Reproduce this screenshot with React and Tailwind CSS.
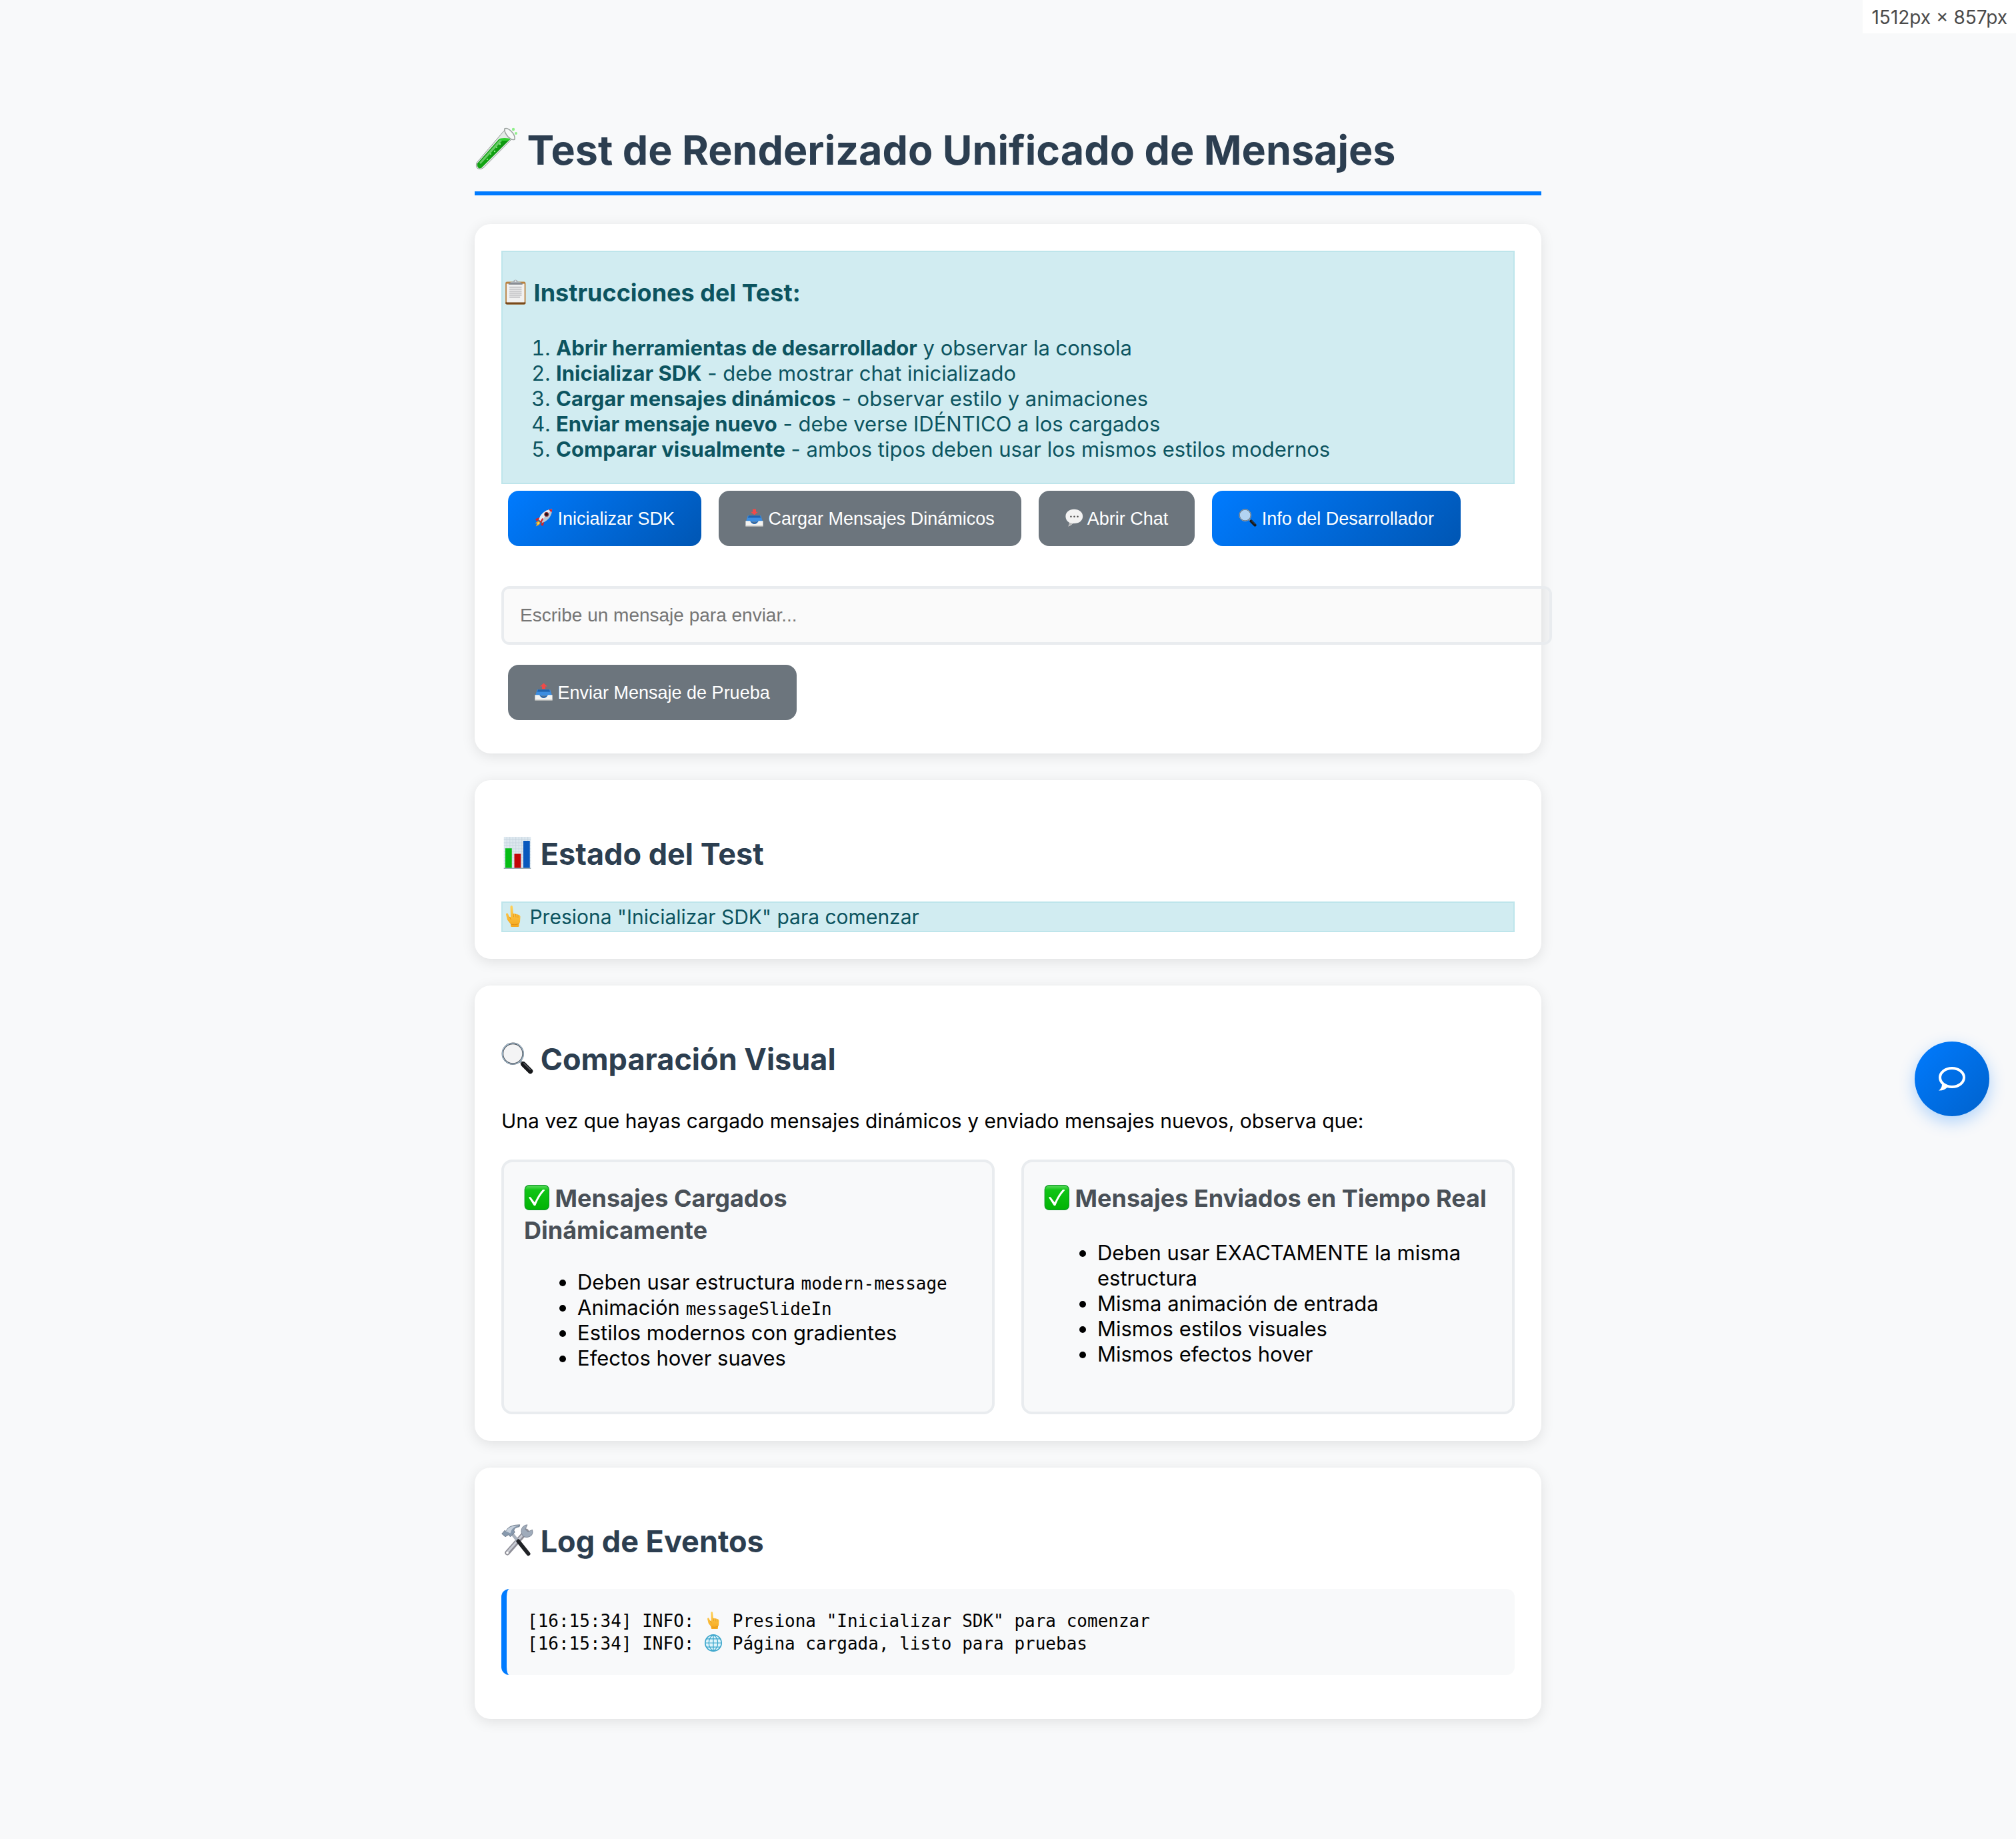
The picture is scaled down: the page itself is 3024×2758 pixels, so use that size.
const Svg = ({ className, children }) => (
  <svg viewBox="0 0 64 64" aria-hidden="true" className={`inline-block shrink-0 ${className}`}>
    {children}
  </svg>
);

const E64 = "size-16 align-[-8px]";
const E48 = "size-12 align-[-6px]";
const E38 = "size-[38px] align-[-5px]";
const E32 = "size-8 align-[-4px]";
const E27 = "size-[27px] align-[-3px]";
const E26 = "size-[26px] align-[-3px]";

const TestTube = ({ className }) => (
  <Svg className={className}>
    <defs>
      <linearGradient id="tube" x1="0" y1="0" x2="1" y2="0.6">
        <stop offset="0" stopColor="#0c8a10" />
        <stop offset="0.5" stopColor="#12a512" />
        <stop offset="1" stopColor="#067a0c" />
      </linearGradient>
    </defs>
    <path d="M45 4 L3 53 Q1 60 5 62 Q10 64 14 60 L58 15Z" fill="#e4eae6" stroke="#8d9692" strokeWidth="1" />
    <path d="M37 17 L4 54 Q3 60 7 61.500 Q10 62 13 58 L53 18Z" fill="url(#tube)" />
    <path d="M38 18 L7 53 L9 55 L43 18Z" fill="#a4e3a2" opacity="0.6" />
    <ellipse cx="45" cy="18" rx="8.500" ry="2" fill="#2fd02f" />
    <g fill="#8ff08a">
      <circle cx="38" cy="25" r="1.200" />
      <circle cx="33" cy="30" r="1" />
      <circle cx="30" cy="36" r="1.200" />
      <circle cx="24" cy="40" r="1" />
      <circle cx="19" cy="48" r="1.100" />
      <circle cx="58" cy="3" r="2.200" />
      <circle cx="62" cy="9" r="2" />
    </g>
    <ellipse cx="52" cy="9" rx="3.500" ry="9.500" transform="rotate(47 52 9)" fill="none" />
    <path d="M45 2Q49 0 55 6Q61 12 60 18Q56 20 50 14Q44 7 45 2Z" fill="#f7f9f8" stroke="#989f9c" strokeWidth="1.500" />
  </Svg>
);

const Clipboard = ({ className }) => (
  <Svg className={className}>
    <rect x="7" y="6" width="51" height="57" rx="4" fill="#b9813f" />
    <rect x="7" y="57" width="51" height="6" rx="3" fill="#7a4a1b" />
    <rect x="10" y="11" width="45" height="47" fill="#f1f1f1" />
    <path d="M17 20H48M17 25H48M17 30H48M17 35H48M17 40H48M17 45H44" stroke="#cdcdcf" strokeWidth="4" />
    <path d="M15 12 Q17 7 26 6 Q28 1 32.500 1 Q37 1 39 6 Q48 7 50 12Z" fill="#a9adb3" />
    <path d="M15 10H50V13H15Z" fill="#7d8187" />
    <circle cx="32.500" cy="4.500" r="2" fill="#e8f0f2" />
  </Svg>
);

const Rocket = ({ className }) => (
  <Svg className={className}>
    <path d="M17 31 L3 36 L6 44 L20 40Z" fill="#d6232a" />
    <path d="M34 46 L30 61 L22 58 L24 42Z" fill="#d6232a" />
    <path d="M16 41 L1 52 L9 52 L4 63 L16 57 L20 50Z" fill="#f9a51b" />
    <path d="M16 45 L7 57 L17 52Z" fill="#ffe65a" />
    <path d="M15 39 C20 19 37 3 62 1 C63 22 49 42 27 50Z" fill="#b9c6d2" />
    <path d="M15 39 C20 19 37 3 62 1 L21 45Z" fill="#e5edf3" />
    <path d="M50 3 Q56 1 62 1 Q62 8 60 13Z" fill="#d6232a" />
    <circle cx="42" cy="20" r="8" fill="#8d2229" />
    <circle cx="42" cy="20" r="5" fill="#10161d" />
    <path d="M13 37 L28 51 L24 54 L11 42Z" fill="#5d6973" />
    <path d="M27 33 L19 46 L24 49 L31 37Z" fill="#d6232a" />
  </Svg>
);

const Tray = ({ className, up }) => (
  <Svg className={className}>
    <path d="M9 24H55L62 46H2Z" fill="#3c8de0" />
    <path d="M12 24H52L55 32H9Z" fill="#1f64b0" />
    <path d="M1 43H17Q23 54 32 54Q41 54 47 43H63V62H1Z" fill="#f3f3f1" />
    <path d="M17 43Q23 54 32 54Q41 54 47 43Q39 50 32 50Q25 50 17 43Z" fill="#1b63b5" />
    <path d="M1 60H63V63H1Z" fill="#bdbdbb" />
    {up ? (
      <path d="M32 1L45 13H38V22H26V13H19Z" fill="#f04a48" />
    ) : (
      <path d="M32 22L45 11H38V1H26V11H19Z" fill="#f04a48" />
    )}
  </Svg>
);

const Bubble = ({ className }) => (
  <Svg className={className}>
    <path d="M31 2C49 2 62 12 62 27S49 52 31 52L27 52Q20 60 10 63Q15 56 14 49Q1 41 1 27C1 12 14 2 31 2Z" fill="#f2f2f2" />
    <path d="M14 49Q15 56 10 63Q20 60 27 52Z" fill="#b9b9b9" />
    <circle cx="20" cy="28" r="3" fill="#4b4b4b" />
    <circle cx="32" cy="28" r="3" fill="#4b4b4b" />
    <circle cx="44" cy="28" r="3" fill="#4b4b4b" />
  </Svg>
);

const Magnifier = ({ className, lens = "#f4f4f5" }) => (
  <Svg className={className}>
    <path d="M38 38L44 45" stroke="#9aa3ab" strokeWidth="6" />
    <path d="M44 44L58 58" stroke="#16181b" strokeWidth="10" strokeLinecap="round" />
    <path d="M45 42L58 55" stroke="#5b6067" strokeWidth="2" strokeLinecap="round" />
    <circle cx="23" cy="23" r="20.500" fill={lens} stroke="#565c63" strokeWidth="3.500" />
    <circle cx="23" cy="23" r="21" fill="none" stroke="#a9c6dd" strokeWidth="1.500" />
  </Svg>
);

const Chart = ({ className }) => (
  <Svg className={className}>
    <rect x="5" y="0" width="54" height="64" fill="#dde8ef" />
    <path
      d="M5 6H59M5 12H59M5 18H59M5 24H59M5 30H59M5 36H59M5 42H59M5 48H59M5 54H59M11 0V64M17 0V64M23 0V64M29 0V64M35 0V64M41 0V64M47 0V64M53 0V64"
      stroke="#c3d2dc"
      strokeWidth="1"
    />
    <rect x="8" y="23" width="13" height="40" fill="#06bd16" />
    <rect x="26" y="34" width="13" height="29" fill="#c30508" />
    <rect x="44" y="8" width="13" height="55" fill="#0958bd" />
    <rect x="5" y="62" width="54" height="2" fill="#9aa9b3" />
  </Svg>
);

const Finger = ({ className }) => (
  <Svg className={className}>
    <defs>
      <linearGradient id="skin" x1="0" y1="0" x2="0" y2="1">
        <stop offset="0" stopColor="#ffd25a" />
        <stop offset="1" stopColor="#f5a81d" />
      </linearGradient>
    </defs>
    <path
      d="M23 4Q23 0 26.500 0Q30 0 30 4L32 25Q36 23 39 26Q43 24 46 28Q52 27 53 33L52 49Q51 53 49 55V62Q49 64 46 64H27Q24 64 24 61V56L14 43L10 27Q10 23 13 23Q16 23 17 27L20 34L24 34Z"
      fill="url(#skin)"
    />
    <path d="M32 25L33 34M39 26L40 35M46 28L46 36M20 34L25 42" fill="none" stroke="#d98b12" strokeWidth="1.500" strokeLinecap="round" />
    <path d="M24 56Q36 60 49 55" fill="none" stroke="#df8f14" strokeWidth="2" />
  </Svg>
);

const Check = ({ className }) => (
  <Svg className={className}>
    <defs>
      <linearGradient id="check" x1="0" y1="0" x2="0" y2="1">
        <stop offset="0" stopColor="#5fdc62" />
        <stop offset="0.2" stopColor="#0fc414" />
        <stop offset="1" stopColor="#02b306" />
      </linearGradient>
    </defs>
    <rect x="2" y="1" width="61" height="62" rx="11" fill="url(#check)" stroke="#149a2a" strokeWidth="2" />
    <path d="M12 32Q14 29 17 31L27 44Q36 24 47 12Q51 11 53 13Q38 29 29 52Q26 54 24 51Z" fill="#fff" />
  </Svg>
);

const Tools = ({ className }) => (
  <Svg className={className}>
    <path d="M50 14L12 57" stroke="#8f8f98" strokeWidth="10" strokeLinecap="round" />
    <path d="M49 14L12 56" stroke="#c9ccd4" strokeWidth="4" strokeLinecap="round" />
    <path d="M52 1L48 10L53 15L62 11Q65 21 56 25Q47 28 42 22Q37 12 43 5Q47 1 52 1Z" fill="#9fabba" stroke="#70798a" strokeWidth="1" />
    <circle cx="12" cy="57" r="2.500" fill="#fff" />
    <path d="M20 17L36 37" stroke="#a7b0bc" strokeWidth="6" />
    <path d="M34 34L54 59" stroke="#202226" strokeWidth="8" strokeLinecap="round" />
    <path d="M1 19L7 12L9 14Q14 1 37 1L36 5Q27 6 25 12L27 16L18 25L14 21L8 25Z" fill="#8799ad" stroke="#606c7b" strokeWidth="1" />
    <path d="M9 14Q15 3 35 2Q20 6 18 18Z" fill="#c6d0dc" />
  </Svg>
);

const Globe = ({ className }) => (
  <Svg className={className}>
    <circle cx="32" cy="32" r="30" fill="#dff4fb" stroke="#3aa5cb" strokeWidth="4" />
    <path
      d="M32 2V62M2 32H62M7 17H57M7 47H57M32 2C10 16 10 48 32 62M32 2C54 16 54 48 32 62"
      fill="none"
      stroke="#3aa5cb"
      strokeWidth="3"
    />
  </Svg>
);

const ChatIcon = () => (
  <svg viewBox="0 0 40 40" aria-hidden="true" className="size-10">
    <ellipse cx="20" cy="18" rx="18" ry="14" fill="none" stroke="#fff" strokeWidth="4" />
    <path d="M5 28Q5 34 0 37.500Q8 38 14 32Z" fill="#fff" />
  </svg>
);

const Card = ({ children }) => (
  <section className="rounded-3xl bg-white p-10 shadow-[0_4px_20px_rgba(0,0,0,0.1)]">{children}</section>
);

const H2 = ({ children }) => (
  <h2 className="my-[42px] text-[45px] leading-[58px] font-bold text-[#2c3e50]">{children}</h2>
);

const buttonTones = {
  blue: "bg-[linear-gradient(135deg,#007bff,#0056b3)]",
  gray: "bg-[#6c757d]",
};

const Button = ({ tone, children }) => (
  <button
    type="button"
    className={`h-[83px] rounded-2xl px-10 font-['Liberation_Sans',sans-serif] text-[27px] leading-8 whitespace-nowrap text-white ${buttonTones[tone]}`}
  >
    {children}
  </button>
);

const steps = [
  ["Abrir herramientas de desarrollador", " y observar la consola"],
  ["Inicializar SDK", " - debe mostrar chat inicializado"],
  ["Cargar mensajes dinámicos", " - observar estilo y animaciones"],
  ["Enviar mensaje nuevo", " - debe verse IDÉNTICO a los cargados"],
  ["Comparar visualmente", " - ambos tipos deben usar los mismos estilos modernos"],
];

const Code = ({ children }) => (
  <code className="font-['DejaVu_Sans_Mono',monospace] text-[26px] leading-none">{children}</code>
);

const Compare = ({ title, children }) => (
  <div className="rounded-2xl border-4 border-[#e9ecef] bg-[#f8f9fa] px-[30px] pt-8 pb-[61px]">
    <h3 className="mb-[37px] text-[36px] leading-[44px] font-bold text-[#495057]">
      <Check className="mb-2 size-[38px] align-[-13px]" /> {title}
    </h3>
    <ul className="list-disc pl-20">{children}</ul>
  </div>
);

export default function App() {
  return (
    <div className="relative min-h-screen bg-[#f8f9fa] px-10 pt-[186px] pb-[180px] font-['Inter',sans-serif] text-[31px] leading-[38px] text-black">
      <div className="absolute top-0 right-0 bg-white px-[13px] pt-[2px] text-[28px] leading-[48px] text-[#4a4a4a]">
        1512px × 857px
      </div>

      <main className="mx-auto flex w-full max-w-[1600px] flex-col gap-10">
        <h1 className="mb-[3px] border-b-[6px] border-[#007bff] pb-[23px] text-[61px] leading-[78px] font-bold text-[#2c3e50]">
          <TestTube className={E64} /> Test de Renderizado Unificado de Mensajes
        </h1>

        <Card>
          <div className="border-2 border-[#bee5eb] bg-[#d1ecf1] pt-[39px] pb-[31px] text-[#0c5460]">
            <h3 className="mb-[42px] text-[36px] leading-[44px] font-bold">
              <Clipboard className={E38} /> Instrucciones del Test:
            </h3>
            <ol className="list-decimal pl-20">
              {steps.map(([strong, rest]) => (
                <li key={strong}>
                  <strong className="font-bold">{strong}</strong>
                  {rest}
                </li>
              ))}
            </ol>
          </div>
          <div className="mx-[10px] mt-[10px] flex flex-wrap gap-[26px]">
            <Button tone="blue">
              <Rocket className={E27} /> Inicializar SDK
            </Button>
            <Button tone="gray">
              <Tray className={E27} /> Cargar Mensajes Dinámicos
            </Button>
            <Button tone="gray">
              <Bubble className={E27} /> Abrir Chat
            </Button>
            <Button tone="blue">
              <Magnifier className={E27} lens="#b3d3f2" /> Info del Desarrollador
            </Button>
          </div>
          <input
            type="text"
            aria-label="Mensaje"
            placeholder="Escribe un mensaje para enviar..."
            className="mt-[60px] block h-[88px] w-[calc(100%+56px)] rounded-xl border-4 border-[#e9ecef] bg-black/2 bg-clip-padding px-6 font-['Liberation_Sans',sans-serif] text-[28px] leading-8 placeholder:text-[#757575]"
          />
          <div className="mx-[10px] mt-[30px] mb-[10px] flex">
            <Button tone="gray">
              <Tray className={E27} up /> Enviar Mensaje de Prueba
            </Button>
          </div>
        </Card>

        <Card>
          <H2>
            <Chart className={E48} /> Estado del Test
          </H2>
          <div className="border-2 border-[#bee5eb] bg-[#d1ecf1] text-[30px] leading-[42px] text-[#0c5460]">
            <Finger className={E32} /> Presiona "Inicializar SDK" para comenzar
          </div>
        </Card>

        <Card>
          <H2>
            <Magnifier className={E48} /> Comparación Visual
          </H2>
          <p className="text-[30px] leading-[42px]">
            Una vez que hayas cargado mensajes dinámicos y enviado mensajes nuevos, observa que:
          </p>
          <div className="mt-[37px] grid grid-cols-2 gap-10">
            <Compare title="Mensajes Cargados Dinámicamente">
              <li>
                Deben usar estructura <Code>modern-message</Code>
              </li>
              <li>
                Animación <Code>messageSlideIn</Code>
              </li>
              <li>Estilos modernos con gradientes</li>
              <li>Efectos hover suaves</li>
            </Compare>
            <Compare title="Mensajes Enviados en Tiempo Real">
              <li>Deben usar EXACTAMENTE la misma estructura</li>
              <li>Misma animación de entrada</li>
              <li>Mismos estilos visuales</li>
              <li>Mismos efectos hover</li>
            </Compare>
          </div>
        </Card>

        <Card>
          <H2>
            <Tools className={E48} /> Log de Eventos
          </H2>
          <div className="mb-[26px] rounded-xl border-l-8 border-[#007bff] bg-[#f8f9fa] px-[31px] pt-[31px] pb-[30px] font-['DejaVu_Sans_Mono',monospace] text-[26px] leading-[34px]">
            <p>
              [16:15:34] INFO: <Finger className={E26} /> Presiona "Inicializar SDK" para comenzar
            </p>
            <p>
              [16:15:34] INFO: <Globe className={E26} /> Página cargada, listo para pruebas
            </p>
          </div>
        </Card>
      </main>

      <button
        type="button"
        aria-label="Abrir chat"
        className="absolute top-[1562px] right-10 flex size-28 items-center justify-center rounded-full bg-[linear-gradient(135deg,#007bff,#0062cc)] shadow-[0_8px_24px_rgba(0,123,255,0.3)]"
      >
        <ChatIcon />
      </button>
    </div>
  );
}
